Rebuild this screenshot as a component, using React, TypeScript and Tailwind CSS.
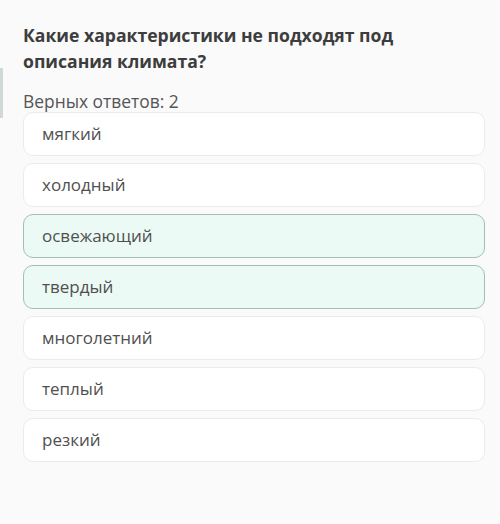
import React from "react";

const options = [
  { t: "мягкий", s: false },
  { t: "холодный", s: false },
  { t: "освежающий", s: true },
  { t: "твердый", s: true },
  { t: "многолетний", s: false },
  { t: "теплый", s: false },
  { t: "резкий", s: false },
];

export default function App() {
  return (
    <div className="relative w-[500px] h-[524px] bg-[#fafafa] overflow-hidden" style={{ fontFamily: '"Open Sans", "Noto Sans", sans-serif' }}>
      <div className="absolute left-0 top-[68px] w-[3px] h-[50px] bg-[#cfdad5]" />
      <div className="pl-[23px] pr-[16px] pt-[22px]">
        <h1 className="text-[17.6px] leading-[26px] font-bold text-[#3d3d3d] w-[400px]">
          Какие характеристики не подходят под описания климата?
        </h1>
        <div className="mt-[16px] text-[17.4px] leading-[22px] text-[#555555]">Верных ответов: 2</div>
        <div className="mt-0 flex flex-col gap-[7px] w-[462px]">
          {options.map((o) => (
            <div
              key={o.t}
              className={
                o.s
                  ? "h-[44px] flex items-center pl-[18px] rounded-[10px] border border-[#a3bdb8] bg-[#ebfaf4] text-[17px] text-[#505050]"
                  : "h-[44px] flex items-center pl-[18px] rounded-[10px] border border-[#ebebeb] bg-[#ffffff] text-[17px] text-[#505050]"
              }
            >
              {o.t}
            </div>
          ))}
        </div>
      </div>
    </div>
  );
}
